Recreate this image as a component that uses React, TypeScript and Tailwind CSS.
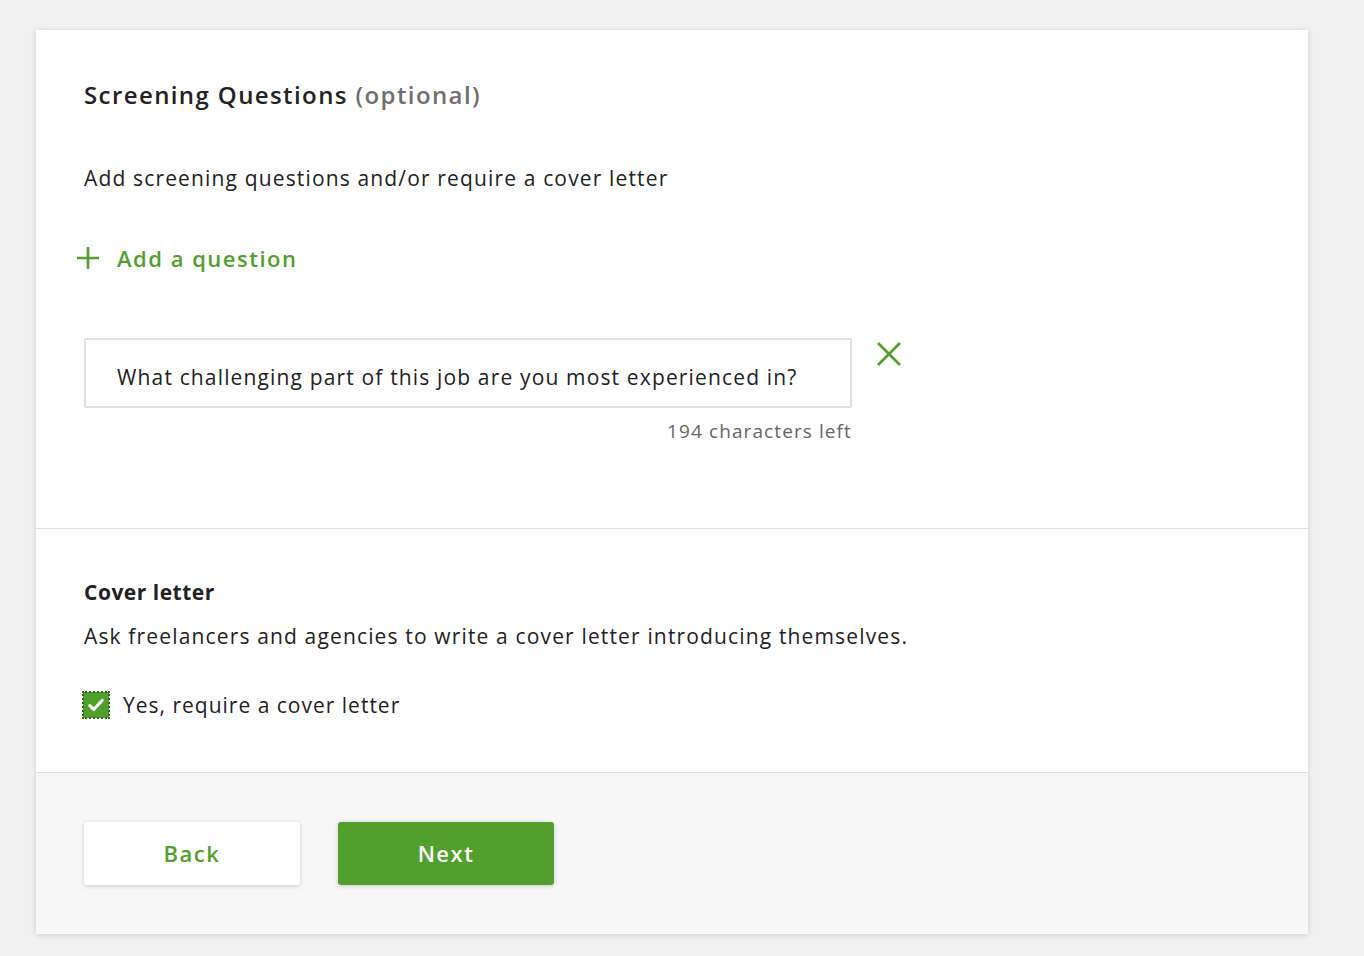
import React, { useState } from 'react';

const GREEN = '#529f2e';

export default function App() {
  const [checked, setChecked] = useState(true);
  const [question, setQuestion] = useState('What challenging part of this job are you most experienced in?');

  return (
    <div className="min-h-[956px] w-full bg-[#f1f1f1] pt-[30px] pl-[36px] font-['Open_Sans',sans-serif] text-[#222]">
      <div className="w-[1272px] bg-white shadow-[0_1px_6px_rgba(0,0,0,0.15)]">
        {/* screening questions */}
        <section className="h-[499px] border-b border-[#e0e0e0] px-[48px] pt-[49px]">
          <h2 className="text-[24px] font-semibold leading-[32px] tracking-[1.4px]">
            Screening Questions <span className="text-[#6f6f6f]">(optional)</span>
          </h2>
          <p className="mt-[53px] text-[21px] leading-[28px] tracking-[1.15px]">
            Add screening questions and/or require a cover letter
          </p>

          <button className="mt-[52px] -ml-[8px] flex h-[28px] items-center gap-[17px] text-[22px] font-semibold leading-[28px] tracking-[1.5px] text-[#529f2e]">
            <svg width="24" height="24" viewBox="0 0 24 24" fill="none" stroke={GREEN} strokeWidth="2.6">
              <path d="M12 1v22M1 12h22" />
            </svg>
            Add a question
          </button>

          <div className="mt-[66px] flex items-start gap-[25px]">
            <div className="w-[768px]">
              <input
                value={question}
                onChange={(e) => setQuestion(e.target.value)}
                className="h-[70px] w-full rounded-[2px] border-2 border-[#e0e0e0] px-[31px] pt-[7px] text-[21px] tracking-[1.15px] text-[#222] outline-none"
              />
              <div className="mt-[10px] text-right text-[19px] leading-[26px] tracking-[1.1px] text-[#656565]">
                {Math.max(0, 256 - question.length)} characters left
              </div>
            </div>
            <button className="mt-[4px]" aria-label="Remove question">
              <svg width="24" height="24" viewBox="0 0 24 24" fill="none" stroke={GREEN} strokeWidth="2.8">
                <path d="M1 1l22 22M23 1L1 23" />
              </svg>
            </button>
          </div>
        </section>

        {/* cover letter */}
        <section className="h-[244px] border-b border-[#e0e0e0] px-[48px] pt-[49px]">
          <h3 className="text-[21px] font-bold leading-[28px] tracking-[0.5px]">Cover letter</h3>
          <p className="mt-[16px] text-[21px] leading-[28px] tracking-[1.15px]">
            Ask freelancers and agencies to write a cover letter introducing themselves.
          </p>
          <label className="mt-[41px] flex cursor-pointer items-center gap-[14px]">
            <span
              onClick={() => setChecked(!checked)}
              className="-ml-[1px] flex h-[26px] w-[26px] items-center justify-center bg-[#529f2e] outline-2 outline-offset-[-1px] outline-dotted outline-[#2f6d14]"
            >
              {checked && (
                <svg width="18" height="18" viewBox="0 0 16 16" fill="none" stroke="white" strokeWidth="2.8" strokeLinecap="round" strokeLinejoin="round">
                  <path d="M2.5 8.5l3.5 3.5 7.5-8" />
                </svg>
              )}
            </span>
            <span className="text-[21px] leading-[28px] tracking-[1px]">Yes, require a cover letter</span>
          </label>
        </section>

        {/* footer */}
        <footer className="flex h-[161px] gap-[38px] bg-[#f7f7f7] px-[48px] pt-[49px]">
          <button className="h-[63px] w-[216px] rounded-[3px] bg-white text-[22px] font-semibold tracking-[1.5px] text-[#529f2e] shadow-[0_1px_5px_rgba(0,0,0,0.18)]">
            Back
          </button>
          <button className="h-[63px] w-[216px] rounded-[3px] bg-[#529f2e] text-[22px] font-semibold tracking-[1.5px] text-white shadow-[0_1px_5px_rgba(0,0,0,0.18)]">
            Next
          </button>
        </footer>
      </div>
    </div>
  );
}
